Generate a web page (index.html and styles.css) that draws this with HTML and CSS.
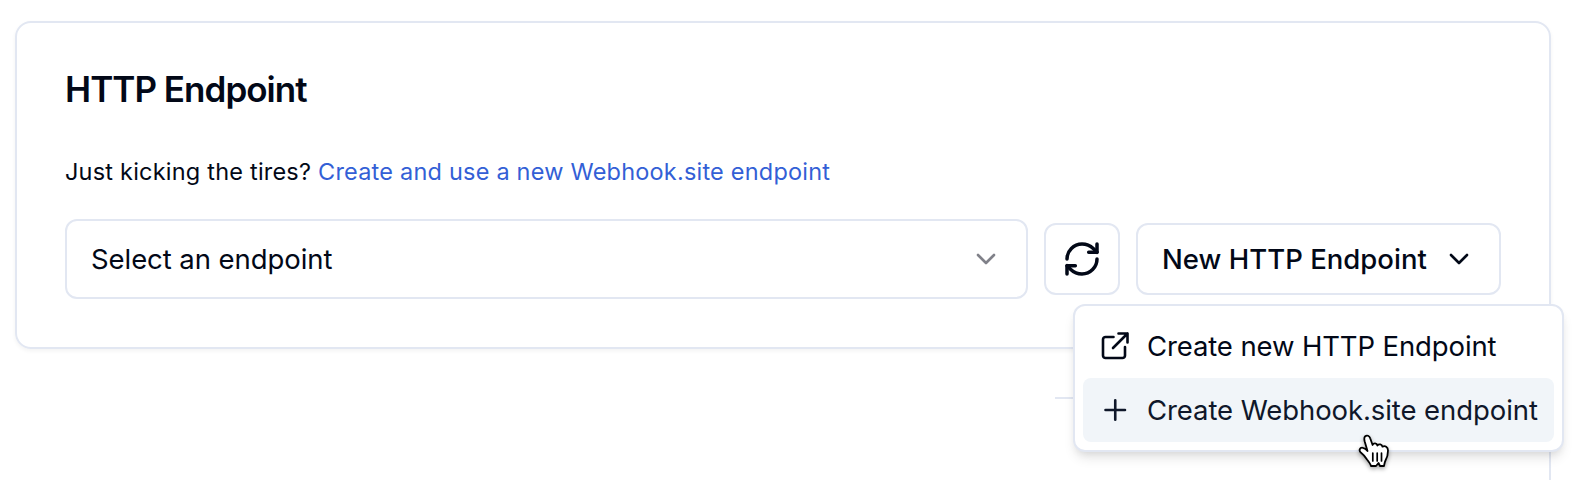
FILE: index.html
```html
<!DOCTYPE html>
<html lang="en">
<head>
<meta charset="utf-8">
<title>HTTP Endpoint</title>
<link rel="stylesheet" href="styles.css">
</head>
<body>
<main class="page">
  <section class="card">
    <h2 class="title">HTTP Endpoint</h2>
    <p class="hint">Just kicking the tires? <a class="link">Create and use a new Webhook.site endpoint</a></p>
    <div class="controls">
      <div class="select">
        <span class="label">Select an endpoint</span>
        <svg class="chevron muted" viewBox="0 0 20 12"><path d="M2 2l8 8 8-8"/></svg>
      </div>
      <button class="button refresh" aria-label="Refresh">
        <svg class="refresh-icon" viewBox="0 0 24 24"><path d="M3 12a9 9 0 0 1 9-9 9.75 9.75 0 0 1 6.74 2.74L21 8"/><path d="M21 3v5h-5"/><path d="M21 12a9 9 0 0 1-9 9 9.75 9.75 0 0 1-6.74-2.74L3 16"/><path d="M8 16H3v5"/></svg>
      </button>
      <button class="button new">
        <span class="label">New HTTP Endpoint</span>
        <svg class="chevron" viewBox="0 0 20 12"><path d="M2 2l8 8 8-8"/></svg>
      </button>
    </div>
  </section>
  <section class="next-card"></section>
</main>
<div class="menu">
  <div class="item">
    <svg class="item-icon" viewBox="0 0 28 28"><path d="M12.500 5H4.500a2.500 2.500 0 0 0-2.500 2.500v16a2.500 2.500 0 0 0 2.500 2.500h17a2.500 2.500 0 0 0 2.500-2.500V15"/><path d="M17.500 1.500h9v9M26.500 1.500L12 16"/></svg>
    <span class="label item-first">Create new HTTP Endpoint</span>
  </div>
  <div class="item active">
    <svg class="item-icon" viewBox="0 0 28 28"><path d="M4.500 14h19.500M14.250 4.250v19.500"/></svg>
    <span class="label item-second">Create Webhook.site endpoint</span>
  </div>
</div>
<svg class="cursor" viewBox="0 0 34 38"><path d="M7 3.500C9 1.500 11.500 3 12.200 5.200L14.600 12C15.500 9.700 18.800 9.800 19.400 12.500C21 10.500 23.800 11.300 24.500 13.700C27 12.300 30 14 30 17.500C30 22 29.500 24 27.500 27.500C26.500 29.500 26.500 31 26 33H22L20.500 30L18 33H13C12.500 31 11 29 9 26.500C7 23.500 5.500 21.500 2.800 19.500C.5 17.500 1.800 14 5 14.800C7.300 15.300 8.500 16.500 9.500 18L6.700 8.500C6.200 6.500 6 4.500 7 3.500Z"/><path class="grooves" d="M14.800 20v8M19.200 20v8M23.500 20v8"/></svg>
</body>
</html>
```
FILE: styles.css
```css
* { box-sizing: border-box; }
body {
  margin: 0;
  height: 480px;
  overflow: hidden;
  background: #fff;
  color: #020817;
  font-family: Inter, "Liberation Sans", sans-serif;
}
svg {
  fill: none;
  stroke: currentColor;
  stroke-linecap: round;
  stroke-linejoin: round;
  flex: none;
  overflow: visible;
}
.page { padding: 21px 34px 0 15px; }
.card {
  height: 328px;
  padding: 46px 48px 0;
  border: 2px solid #e2e7f2;
  border-radius: 16px;
  box-shadow: 0 2px 4px rgb(0 0 0 / 5%);
}
.title {
  margin: 0;
  font-size: 35px;
  font-weight: 600;
  line-height: 40px;
  letter-spacing: -0.97px;
}
.hint {
  margin: 45px 0 0;
  font-size: 23.5px;
  line-height: 36px;
  letter-spacing: 0.21px;
  white-space: nowrap;
}
.link { color: #335fd6; }
.controls {
  display: flex;
  align-items: center;
  gap: 16px;
  margin-top: 29px;
}
.label { padding-bottom: 1px; line-height: 34px; }
.select {
  display: flex;
  flex: 1;
  align-items: center;
  justify-content: space-between;
  height: 80px;
  padding: 0 30px 0 24px;
  border: 2px solid #e2e7f2;
  border-radius: 12px;
  font-size: 27.5px;
  letter-spacing: -0.07px;
}
.chevron { width: 20px; height: 12px; stroke-width: 2.6; }
.muted { color: #808189; }
.button {
  display: flex;
  align-items: center;
  height: 72px;
  padding: 0;
  border: 2px solid #e2e7f2;
  border-radius: 12px;
  background: #fff;
  color: inherit;
  font: 500 27.5px Inter, "Liberation Sans", sans-serif;
}
.refresh { justify-content: center; width: 76px; }
.refresh-icon { width: 40px; height: 40px; stroke-width: 2.1; }
.new {
  justify-content: space-between;
  width: 365px;
  padding: 0 30px 0 24px;
  letter-spacing: 0.02px;
}
.next-card {
  height: 83px;
  margin: 48px 0 0 1040px;
  border: 2px solid #e2e7f2;
  border-width: 2px 2px 0 0;
  border-top-right-radius: 16px;
}
.menu {
  position: absolute;
  top: 304px;
  left: 1073px;
  width: 491px;
  height: 148px;
  padding: 8px;
  border: 2px solid #e2e7f2;
  border-radius: 12px;
  background: #fff;
  box-shadow: 0 8px 12px -2px rgb(0 0 0 / 10%), 0 4px 8px -4px rgb(0 0 0 / 10%);
}
.item {
  display: flex;
  align-items: center;
  gap: 18px;
  height: 64px;
  padding-left: 18px;
  border-radius: 8px;
  font-size: 27.5px;
  white-space: nowrap;
}
.item-first { letter-spacing: -0.12px; }
.item-second { letter-spacing: -0.08px; }
.active { background: #f1f5f9; color: #0f172a; }
.item-icon { width: 28px; height: 28px; stroke-width: 2.6; }
.cursor {
  position: absolute;
  top: 433px;
  left: 1358px;
  width: 34px;
  height: 38px;
  fill: #fff;
  stroke: #000;
  stroke-width: 1.8;
  filter: drop-shadow(0 2px 2px rgb(0 0 0 / 35%));
}
.grooves { stroke-width: 1.7; }
```
